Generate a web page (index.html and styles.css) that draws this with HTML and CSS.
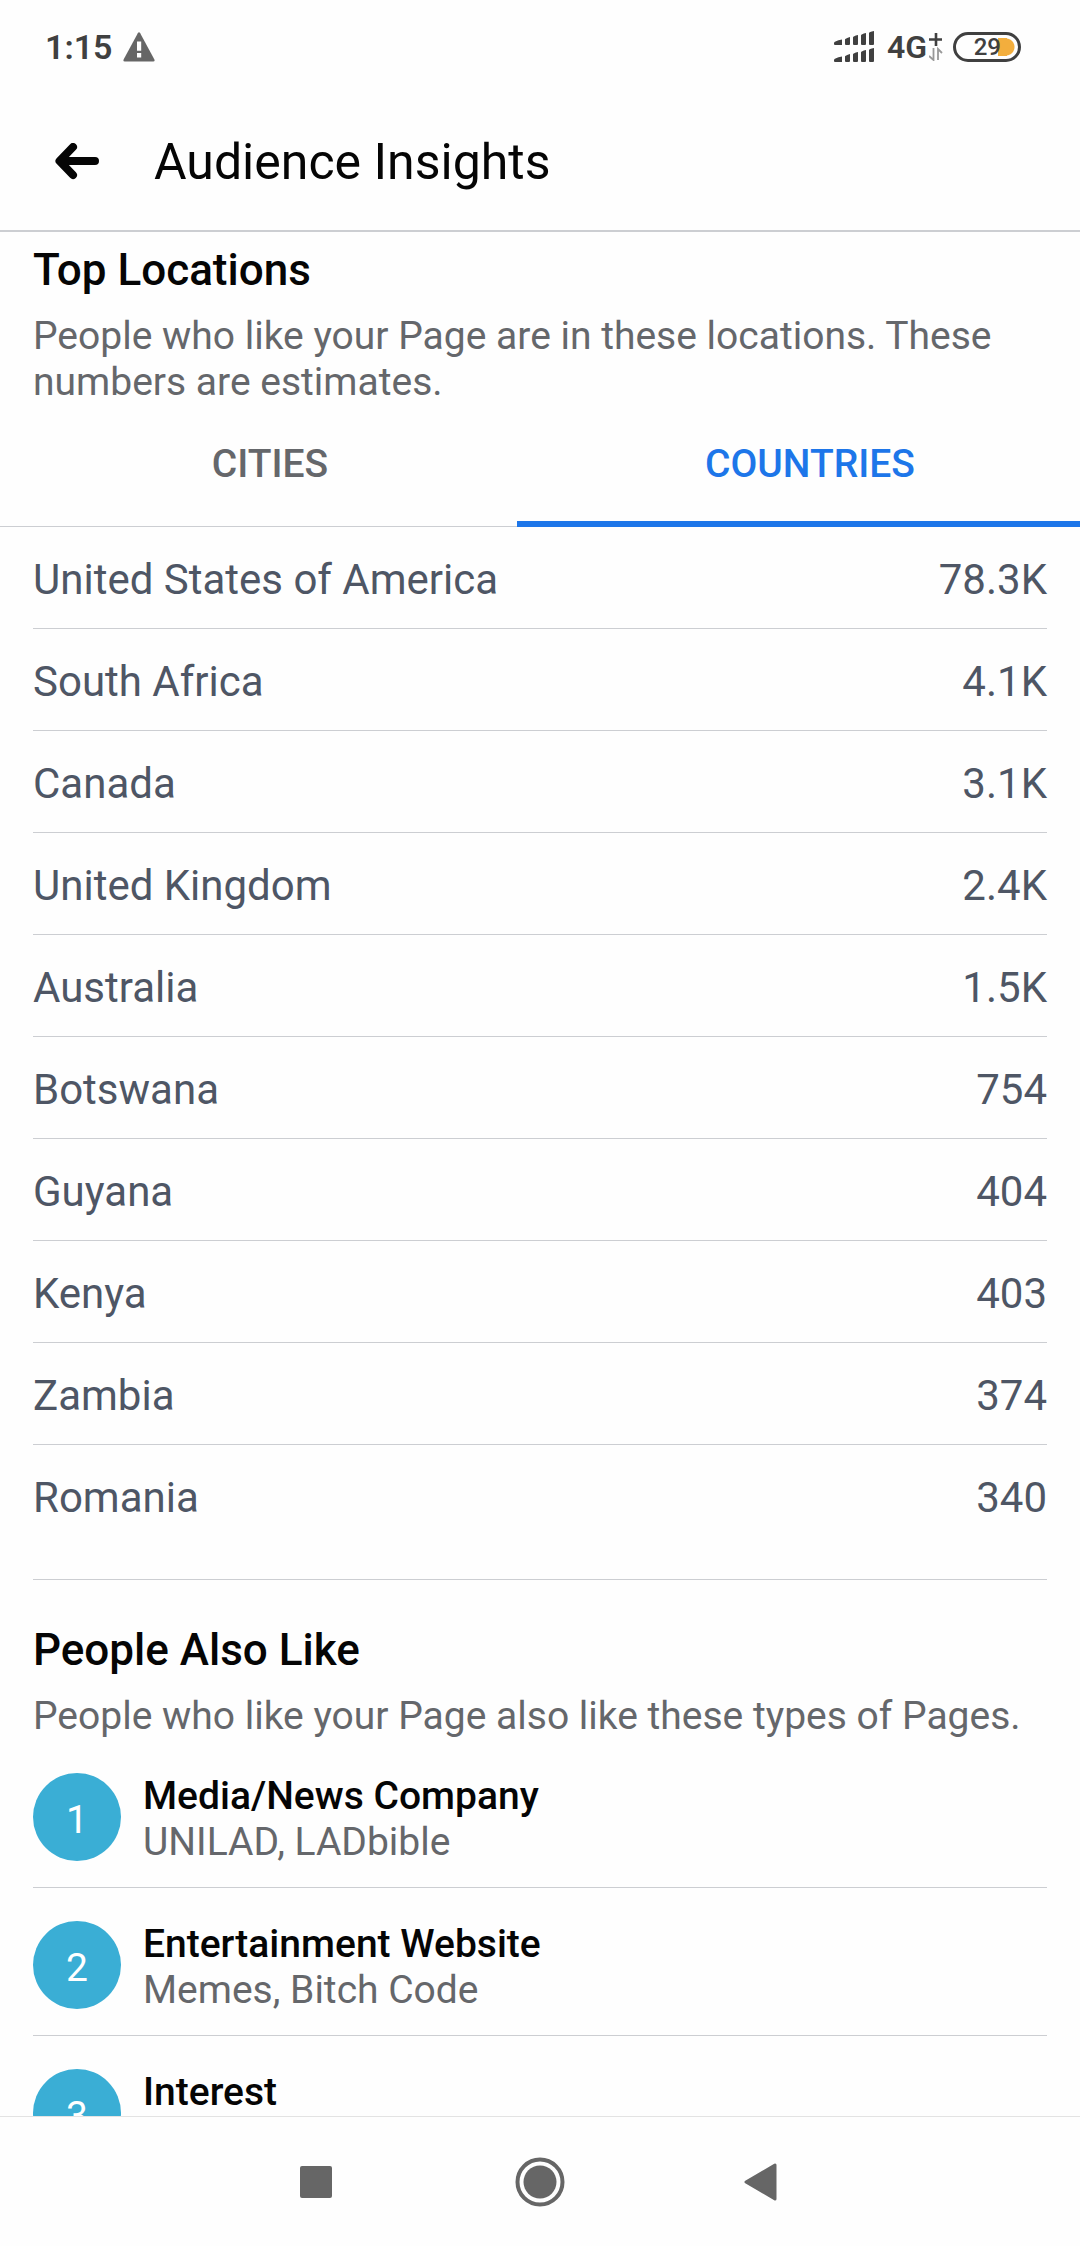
FILE: index.html
```html
<!DOCTYPE html>
<html lang="en">
<head>
<meta charset="utf-8">
<meta name="viewport" content="width=device-width">
<title>Audience Insights</title>
<link rel="stylesheet" href="styles.css">
</head>
<body>
<div class="status">
  <span class="clock">1:15</span>
  <svg class="warning" width="32" height="30" viewBox="0 0 32 30" aria-hidden="true">
    <path d="M14.8 1.2q1.2-1.8 2.4 0L31.4 27.5q.8 2-1.2 2H1.8q-2 0-1.2-2z" fill="#666"/>
    <path d="M14 9.500h4.200v9.300H14zM14 21h4.200v4.500H14z" fill="#fff"/>
  </svg>
  <svg class="signal" width="40" height="32" viewBox="0 0 40 32" fill="#404040" aria-hidden="true">
    <path id="bars" d="M0 12q0-2 8-3.500V14H1q-1 0-1-1zM11 8.500q0-1 5-2.500v7q0 1-1 1h-3q-1 0-1-1zM19 6.500q0-1.500 5-2.500v9q0 1-1 1h-3q-1 0-1-1zM27 4.500q0-1.500 5-2.500v11q0 1-1 1h-3q-1 0-1-1zM35 2q0-1.200 5-2v13q0 1-1 1h-3q-1 0-1-1z"/>
    <use href="#bars" y="17"/>
  </svg>
  <span class="network">4G</span>
  <svg class="data" width="14" height="28" viewBox="0 0 14 28" aria-hidden="true">
    <path d="M7 0v13M0 6.500h13" stroke="#404040" stroke-width="2.600"/>
    <path d="M4.500 15v12L0 23M9 27V16l4 4" fill="none" stroke="#999" stroke-width="1.800"/>
  </svg>
  <span class="battery">29</span>
</div>
<header class="topbar">
  <button class="back" aria-label="Back">
    <svg width="44" height="38" viewBox="0 0 44 38" fill="none" stroke="#050505" stroke-width="8" stroke-linecap="round" stroke-linejoin="round" aria-hidden="true">
      <path d="M40 18H6M18 4 4.500 18 18 32"/>
    </svg>
  </button>
  <h1>Audience Insights</h1>
</header>
<main>
  <section class="locations">
    <h2>Top Locations</h2>
    <p class="note">People who like your Page are in these locations. These numbers are estimates.</p>
    <div class="tabs" role="tablist">
      <button class="tab" role="tab" aria-selected="false">CITIES</button>
      <button class="tab active" role="tab" aria-selected="true">COUNTRIES</button>
    </div>
    <table class="countries">
      <tbody>
        <tr><th scope="row">United States of America</th><td>78.3K</td></tr>
        <tr><th scope="row">South Africa</th><td>4.1K</td></tr>
        <tr><th scope="row">Canada</th><td>3.1K</td></tr>
        <tr><th scope="row">United Kingdom</th><td>2.4K</td></tr>
        <tr><th scope="row">Australia</th><td>1.5K</td></tr>
        <tr><th scope="row">Botswana</th><td>754</td></tr>
        <tr><th scope="row">Guyana</th><td>404</td></tr>
        <tr><th scope="row">Kenya</th><td>403</td></tr>
        <tr><th scope="row">Zambia</th><td>374</td></tr>
        <tr><th scope="row">Romania</th><td>340</td></tr>
      </tbody>
    </table>
  </section>
  <section class="likes">
    <h2>People Also Like</h2>
    <p class="note">People who like your Page also like these types of Pages.</p>
    <ul>
      <li><span class="rank">1</span><div><h3>Media/News Company</h3><p>UNILAD, LADbible</p></div></li>
      <li><span class="rank">2</span><div><h3>Entertainment Website</h3><p>Memes, Bitch Code</p></div></li>
      <li><span class="rank">3</span><div><h3>Interest</h3></div></li>
    </ul>
  </section>
</main>
<nav class="system">
  <button aria-label="Recent apps"><svg width="32" height="32" viewBox="0 0 32 32" aria-hidden="true"><rect width="32" height="32" rx="2" fill="#666"/></svg></button>
  <button aria-label="Home"><svg width="50" height="50" viewBox="0 0 50 50" aria-hidden="true"><circle cx="25" cy="25" r="22.500" fill="none" stroke="#666" stroke-width="4"/><circle cx="25" cy="25" r="16.500" fill="#666"/></svg></button>
  <button aria-label="Go back"><svg width="40" height="38" viewBox="0 0 40 38" aria-hidden="true"><path d="M31 2v34L2 19z" fill="#666" stroke="#666" stroke-width="3" stroke-linejoin="round"/></svg></button>
</nav>
</body>
</html>
```

FILE: styles.css
```css
* {
  box-sizing: border-box;
  margin: 0;
  padding: 0;
}

body {
  display: flex;
  flex-direction: column;
  height: 100vh;
  background: #fefefe;
  color: #050505;
  font-family: Roboto, "Liberation Sans", sans-serif;
}

button {
  border: 0;
  background: none;
  font: inherit;
}

svg {
  display: block;
}

/* Status bar */
.status {
  display: flex;
  flex: none;
  align-items: center;
  height: 94px;
  padding: 0 59px 0 45px;
  color: #404040;
}

.clock {
  font-size: 34px;
  font-weight: 600;
}

.warning {
  margin-left: 10px;
}

.signal {
  margin-left: auto;
}

.network {
  margin-left: 13px;
  font-size: 32px;
  font-weight: 600;
}

.data {
  margin-left: 2px;
}

.battery {
  display: flex;
  align-items: center;
  justify-content: flex-end;
  width: 68px;
  height: 30px;
  margin-left: 10px;
  padding-right: 17px;
  border: 3px solid #404040;
  border-radius: 15px;
  background:
    linear-gradient(#f3ae3d, #f3ae3d) no-repeat 42px 3px / 9px 18px,
    radial-gradient(circle at 50px 12px, #f3ae3d 8px, transparent 9px);
  font-size: 24px;
  font-weight: 500;
}

/* App bar */
.topbar {
  display: flex;
  flex: none;
  align-items: center;
  gap: 55px;
  height: 138px;
  padding: 0 55px;
  border-bottom: 2px solid #ccced2;
}

h1 {
  font-size: 50px;
  font-weight: 400;
}

main {
  flex: 1;
  min-height: 0;
  overflow: hidden;
}

h2 {
  padding: 0 33px;
  font-size: 44px;
  font-weight: 500;
  line-height: 52px;
}

.note {
  margin-top: 17px;
  padding: 0 33px;
  color: #65676b;
  font-size: 39px;
  line-height: 46px;
}

/* Locations */
.locations {
  padding: 12px 0 33px;
}

.tabs {
  position: relative;
  display: grid;
  grid-template-columns: 1fr 1fr;
  height: 122px;
  border-bottom: 1px solid #ccced2;
}

.tabs::after {
  content: "";
  position: absolute;
  right: 0;
  bottom: -1px;
  left: calc(50% - 23px);
  height: 6px;
  background: #1d76e9;
}

.tab {
  padding-bottom: 4px;
  color: #65676b;
  font-size: 39px;
  font-weight: 500;
}

.tab.active {
  color: #1d76e9;
}

.countries {
  width: calc(100% - 66px);
  margin: 0 33px;
  border-spacing: 0;
  color: #4e5665;
  font-size: 42px;
  line-height: 50px;
}

.countries th,
.countries td {
  padding: 28px 0 23px;
  border-bottom: 1px solid #ccced2;
  font-weight: 400;
  text-align: left;
}

.countries td {
  text-align: right;
}

.countries tr:last-child > * {
  border-bottom: 0;
}

/* Related pages */
.likes::before {
  content: "";
  display: block;
  height: 1px;
  margin: 0 33px 44px;
  background: #ccced2;
}

ul {
  margin: 1px 33px 0;
  list-style: none;
}

li {
  display: flex;
  align-items: flex-start;
  gap: 22px;
  padding: 33px 0 22px;
  border-bottom: 1px solid #ccced2;
  color: #65676b;
  font-size: 39px;
  line-height: 46px;
}

h3 {
  color: #050505;
  font-size: 39px;
  font-weight: 500;
}

.rank {
  display: flex;
  flex: none;
  align-items: center;
  justify-content: center;
  width: 88px;
  height: 88px;
  padding-top: 5px;
  border-radius: 50%;
  background: #3aaed5;
  color: #fff;
}

/* System navigation */
.system {
  display: flex;
  flex: none;
  justify-content: center;
  gap: 128px;
  height: 130px;
  border-top: 1px solid #e3e3e3;
}

.system button {
  display: flex;
  align-items: center;
  justify-content: center;
  width: 96px;
}
```
